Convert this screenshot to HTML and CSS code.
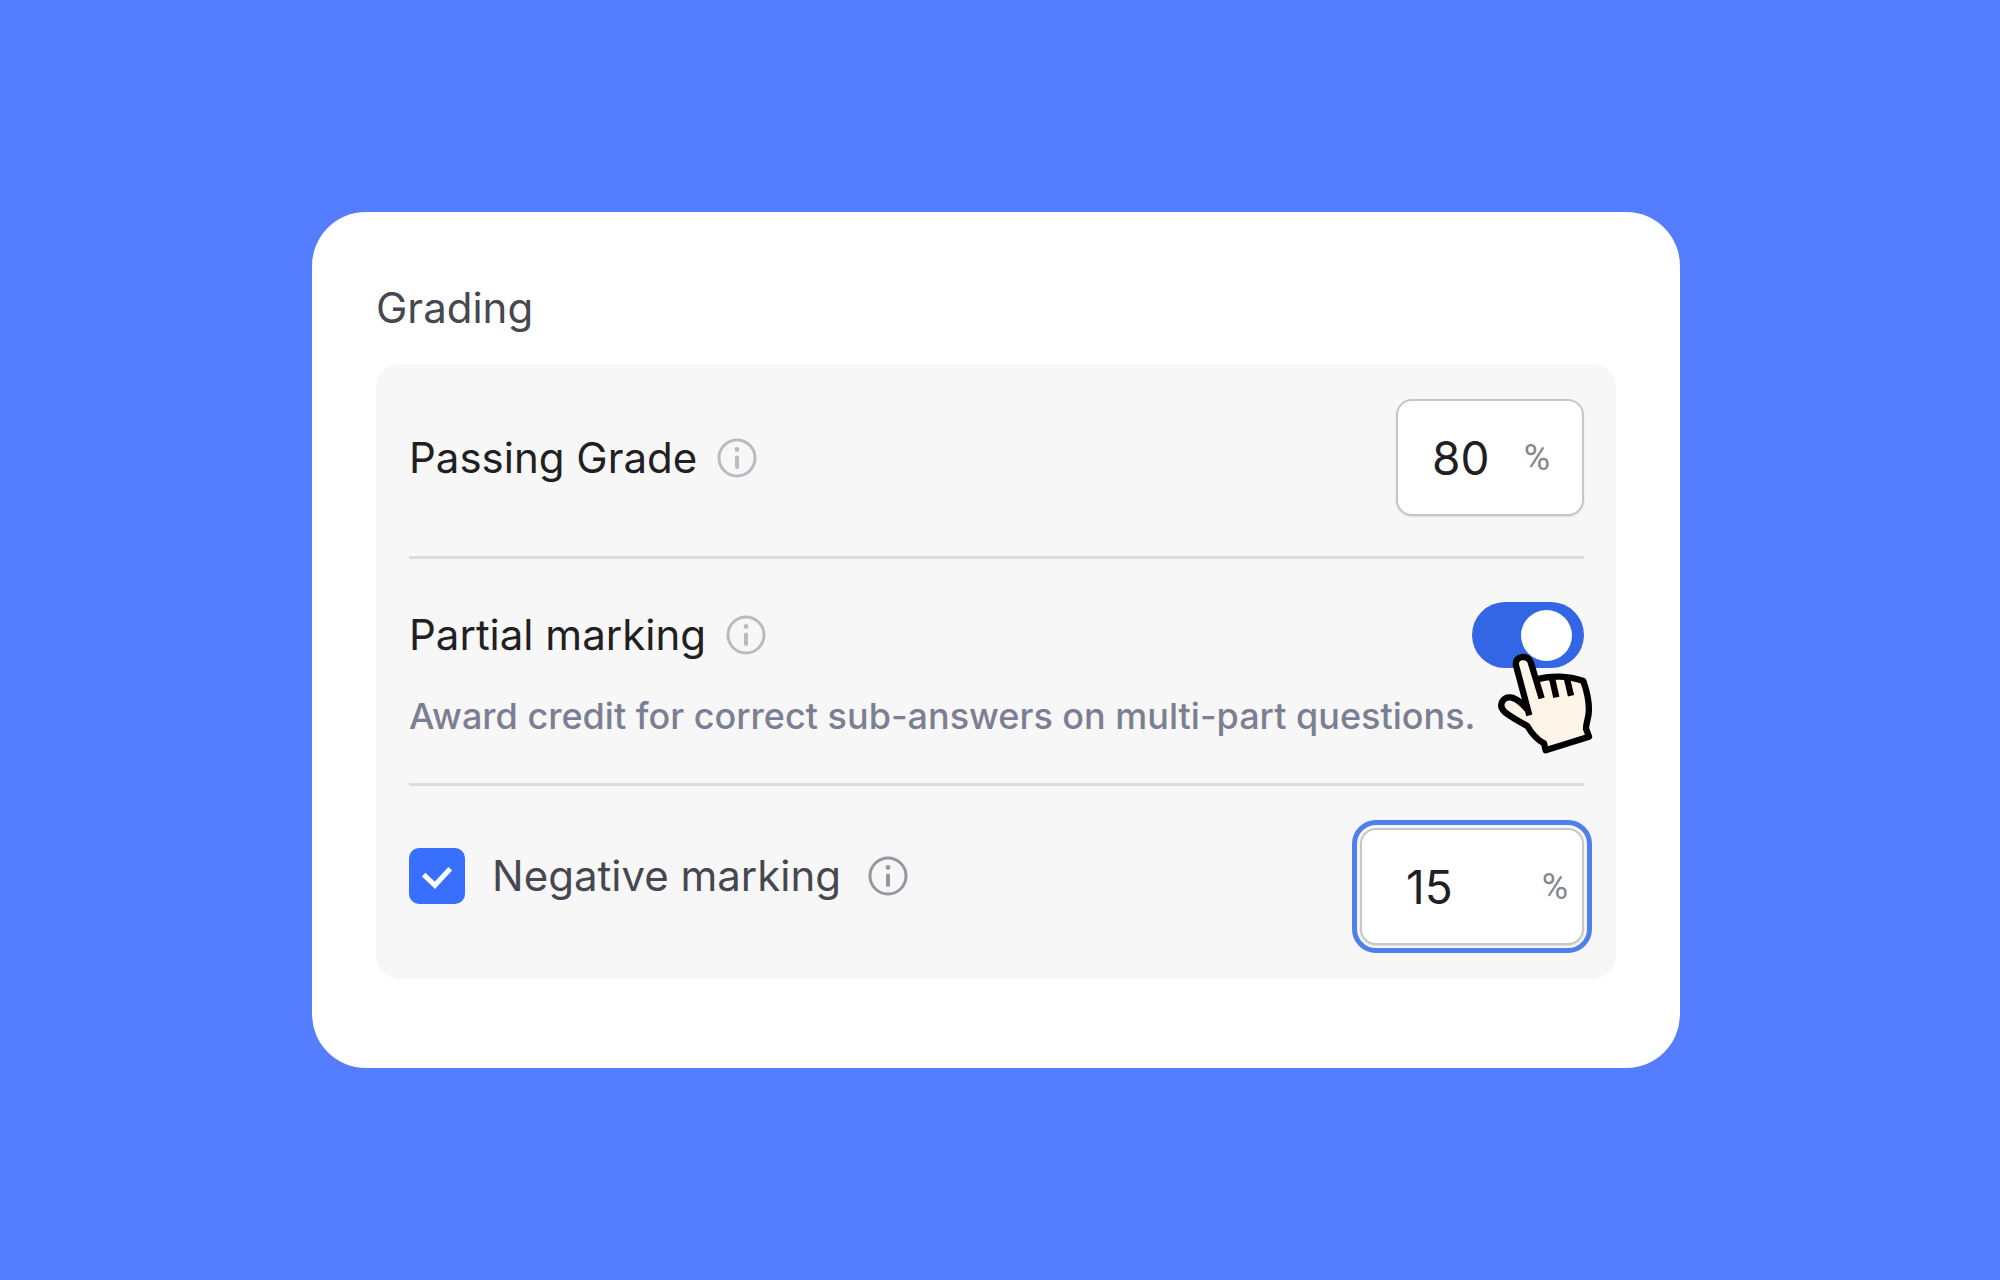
FILE: index.html
```html
<!DOCTYPE html>
<html lang="en">
<head>
<meta charset="utf-8">
<meta name="viewport" content="width=device-width, initial-scale=1">
<title>Grading</title>
<link rel="stylesheet" href="styles.css">
</head>
<body>
<svg class="sprite" aria-hidden="true">
  <symbol id="info" viewBox="0 0 40 40">
    <circle cx="20" cy="20" r="18" fill="none" stroke="currentColor" stroke-width="3"/>
    <circle cx="20" cy="11.5" r="2.4" fill="currentColor"/>
    <path d="M20 19.5v9.5" stroke="currentColor" stroke-width="4" stroke-linecap="round"/>
  </symbol>
</svg>
<main class="card">
  <h1 class="title">Grading</h1>
  <section class="panel">
    <div class="row">
      <div class="name">
        <label for="passing">Passing Grade</label>
        <svg class="info"><use href="#info"/></svg>
      </div>
      <div class="field">
        <input class="number" id="passing" type="text" inputmode="numeric" value="80">
        <span class="unit">%</span>
      </div>
    </div>
    <div class="row row-partial">
      <div class="line">
        <div class="name">
          <label for="partial">Partial marking</label>
          <svg class="info"><use href="#info"/></svg>
        </div>
        <div class="switch">
          <input class="toggle" id="partial" type="checkbox" role="switch" checked>
          <svg class="hand" viewBox="165 216 300 309" aria-hidden="true">
            <path d="M268 403L228 256C222 228 264 222 272 246L288 298C330 288 385 286 430 303C442 338 449 370 446 400C444 418 438 432 438 446L447 470L317 511L312 490C292 480 276 462 262 438C240 426 214 412 194 396C172 374 190 348 216 353C234 358 248 372 262 388Z" fill="#fdf5e8"/>
            <path d="M268 406L228 256C222 228 264 222 272 246L305 355M287 299C330 286 385 286 430 303C442 338 449 370 446 400C444 418 438 432 438 446L447 470L317 511L312 490C292 480 276 462 262 438C240 426 214 412 194 396C172 374 190 348 216 353C234 358 248 372 262 388M337 299L349 352M381 296L393 347" fill="none" stroke="#000" stroke-width="19" stroke-linejoin="round"/>
          </svg>
        </div>
      </div>
      <p class="hint">Award credit for correct sub-answers on multi-part questions.</p>
    </div>
    <div class="row row-negative">
      <div class="name name-muted">
        <input class="check" id="negative" type="checkbox" checked>
        <label for="negative">Negative marking</label>
        <svg class="info"><use href="#info"/></svg>
      </div>
      <div class="field field-active">
        <input class="number" type="text" inputmode="numeric" value="15" aria-label="Negative marking percentage">
        <span class="unit">%</span>
      </div>
    </div>
  </section>
</main>
</body>
</html>
```
FILE: styles.css
```css
* {
  box-sizing: border-box;
}

body {
  margin: 0;
  min-height: 100vh;
  padding: 40px 8px 40px 0;
  display: flex;
  align-items: center;
  justify-content: center;
  background: #547dff;
  font-family: Inter, "Liberation Sans", sans-serif;
  font-size: 42px;
  line-height: 52px;
  color: #1f2022;
}

.sprite {
  position: absolute;
  width: 0;
  height: 0;
}

.card {
  width: 100%;
  max-width: 1368px;
  padding: 70px 64px 89px;
  border-radius: 54px;
  background: #fff;
}

.title {
  margin: 0 0 30px;
  font-size: 42px;
  font-weight: 400;
  color: #46474f;
}

.panel {
  padding: 0 32px 0 33px;
  border-radius: 24px;
  background: #f7f7f7;
}

.row {
  display: flex;
  align-items: center;
  justify-content: space-between;
  padding: 35px 0 40px;
}

.row + .row {
  border-top: 3px solid #dcdcdc;
}

.row-partial {
  flex-direction: column;
  align-items: stretch;
  padding: 43px 0 41px;
}

.row-negative {
  align-items: flex-start;
  padding: 42px 0 34px;
}

.line {
  display: flex;
  align-items: center;
  justify-content: space-between;
}

.name {
  display: flex;
  align-items: center;
  gap: 20px;
}

.name-muted {
  gap: 27px;
  padding-top: 20px;
  color: #46474f;
}

.info {
  width: 40px;
  height: 40px;
  color: #b9bbbe;
}

.name-muted .info {
  color: #9597a3;
}

.field {
  display: flex;
  align-items: center;
  width: 188px;
  height: 117px;
  padding: 0 32px 0 34px;
  border: 2px solid #c5c6c8;
  border-radius: 16px;
  background: #fff;
  box-shadow: 0 1px 2px #0000001a;
}

.field-active {
  width: 224px;
  padding: 0 14px 0 44px;
  outline: 5px solid #4f7fef;
  outline-offset: 3px;
}

.number {
  flex: 1;
  min-width: 0;
  padding: 0;
  border: 0;
  outline: 0;
  background: none;
  font: inherit;
  font-size: 46px;
  color: inherit;
}

.unit {
  font-family: Roboto, "Liberation Sans", sans-serif;
  font-size: 36px;
  color: #85878d;
}

.switch {
  position: relative;
  display: flex;
}

.toggle {
  appearance: none;
  display: flex;
  align-items: center;
  justify-content: flex-end;
  width: 112px;
  height: 66px;
  margin: 0;
  padding: 12px;
  border-radius: 33px;
  background: #3366e4;
}

.toggle::before {
  content: "";
  width: 51px;
  height: 51px;
  border-radius: 50%;
  background: #fff;
}

.hand {
  position: absolute;
  left: 23px;
  top: 50px;
  width: 100px;
  height: 103px;
}

.hint {
  margin: 22px 0 0;
  font-size: 36px;
  font-weight: 450;
  color: #7c7f92;
}

.check {
  appearance: none;
  display: grid;
  place-items: center;
  width: 56px;
  height: 56px;
  margin: 0;
  border-radius: 10px;
  background: #386fff;
}

.check::before {
  content: "";
  width: 13px;
  height: 20px;
  margin-bottom: 6px;
  border: solid #fff;
  border-width: 0 5px 5px 0;
  transform: rotate(43deg);
}
```
